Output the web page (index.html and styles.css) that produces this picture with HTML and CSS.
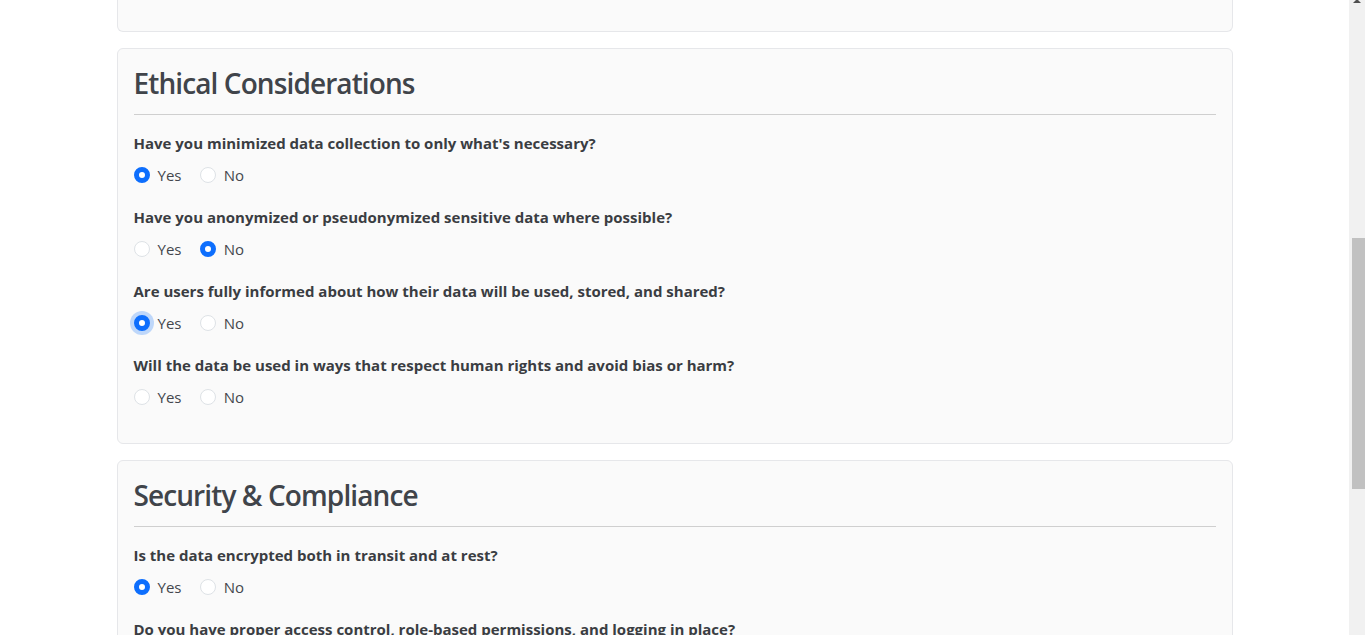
FILE: index.html
```html
<!DOCTYPE html>
<html lang="en">
<head>
<meta charset="utf-8">
<title>Data Ethics Checklist</title>
<link rel="stylesheet" href="styles.css">
</head>
<body>
<div class="page">
  <main class="container">
    <section class="card card-tail"></section>

    <section class="card">
      <h3 class="card-title">Ethical Considerations</h3>
      <div class="group">
        <div class="question">Have you minimized data collection to only what's necessary?</div>
        <label class="check"><input type="radio" name="q1" checked><span>Yes</span></label>
        <label class="check"><input type="radio" name="q1"><span>No</span></label>
      </div>
      <div class="group">
        <div class="question">Have you anonymized or pseudonymized sensitive data where possible?</div>
        <label class="check"><input type="radio" name="q2"><span>Yes</span></label>
        <label class="check"><input type="radio" name="q2" checked><span>No</span></label>
      </div>
      <div class="group">
        <div class="question">Are users fully informed about how their data will be used, stored, and shared?</div>
        <label class="check"><input type="radio" name="q3" class="focused" checked><span>Yes</span></label>
        <label class="check"><input type="radio" name="q3"><span>No</span></label>
      </div>
      <div class="group">
        <div class="question">Will the data be used in ways that respect human rights and avoid bias or harm?</div>
        <label class="check"><input type="radio" name="q4"><span>Yes</span></label>
        <label class="check"><input type="radio" name="q4"><span>No</span></label>
      </div>
    </section>

    <section class="card">
      <h3 class="card-title">Security &amp; Compliance</h3>
      <div class="group">
        <div class="question">Is the data encrypted both in transit and at rest?</div>
        <label class="check"><input type="radio" name="q5" checked><span>Yes</span></label>
        <label class="check"><input type="radio" name="q5"><span>No</span></label>
      </div>
      <div class="group">
        <div class="question">Do you have proper access control, role-based permissions, and logging in place?</div>
        <label class="check"><input type="radio" name="q6"><span>Yes</span></label>
        <label class="check"><input type="radio" name="q6"><span>No</span></label>
      </div>
    </section>
  </main>
  <div class="scrollbar">
    <div class="sb-arrow"></div>
    <div class="sb-thumb"></div>
  </div>
</div>
</body>
</html>
```
FILE: styles.css
```css
html, body {
  margin: 0;
  height: 100%;
  overflow: hidden;
  background: #fff;
}
body {
  font-family: "Open Sans", "Noto Sans", sans-serif;
  color: #333;
}
.page {
  display: flex;
  height: 635px;
  overflow: hidden;
}
.container {
  flex: 1;
  max-width: 1116px;
  margin: 0 auto;
  padding: 0 12px;
  display: flex;
  flex-direction: column;
  gap: 16px;
}
.card {
  flex: none;
  background: #fafafa;
  border: 1px solid #e6e7ea;
  border-radius: 6px;
  padding: 16px;
}
.card-tail {
  box-sizing: border-box;
  height: 32px;
  padding: 0;
  border-top: 0;
  border-top-left-radius: 0;
  border-top-right-radius: 0;
}
.card-title {
  margin: 0 0 16px;
  padding: 2px 0 14px;
  border-bottom: 1px solid #cfcfcf;
  font-size: 28px;
  line-height: 33px;
  font-weight: 600;
  letter-spacing: -0.9px;
  color: #40444a;
}
.group {
  margin-bottom: 16px;
}
.question {
  font-size: 15px;
  line-height: 24px;
  font-weight: 700;
  color: #3a3d42;
  margin-bottom: 8px;
}
.check {
  display: inline-flex;
  align-items: flex-start;
  min-height: 24px;
  margin-right: 14px;
  margin-bottom: 2px;
  font-size: 15px;
  line-height: 24px;
  color: #44474d;
}
.check input {
  appearance: none;
  -webkit-appearance: none;
  width: 16px;
  height: 16px;
  margin: 4px 8px 0 0;
  border: 1px solid #dee2e6;
  border-radius: 50%;
  background: #fff;
  flex: none;
}
.check input:checked {
  background: #fff;
  border: 5px solid #0d6efd;
}
.check input.focused {
  box-shadow: 0 0 0 4px rgba(13, 110, 253, 0.25);
}
.scrollbar {
  flex: none;
  width: 16px;
  background: #f1f1f1;
  display: flex;
  flex-direction: column;
  align-items: center;
}
.sb-arrow {
  width: 0;
  height: 0;
  margin-top: -1px;
  border-left: 4px solid transparent;
  border-right: 4px solid transparent;
  border-bottom: 4px solid #505050;
}
.sb-thumb {
  margin-top: 235px;
  width: 13px;
  margin-left: 2px;
  height: 251px;
  background: #c1c1c1;
}
```
